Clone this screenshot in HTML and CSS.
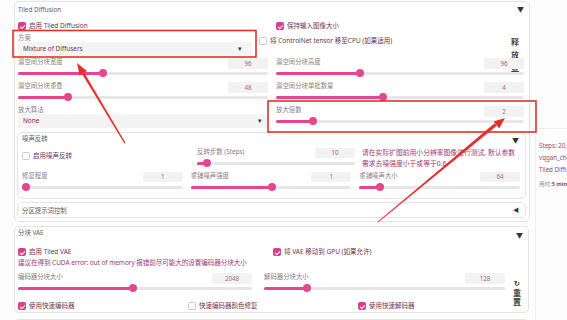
FILE: index.html
```html
<!DOCTYPE html>
<html lang="zh">
<head>
<meta charset="utf-8">
<title>Tiled Diffusion</title>
<link rel="stylesheet" href="styles.css">
</head>
<body>
<div class="page">
  <main class="main">
    <section class="acc td">
      <div class="acc-head"><span class="acc-title">Tiled Diffusion</span><span class="tri">▼</span></div>
      <div class="row enable-row">
        <label class="cb en-left"><span class="box on"></span>启用 Tiled Diffusion</label>
        <label class="cb"><span class="box on"></span>保持输入图像大小</label>
      </div>
      <div class="row method-row">
        <div class="field method">
          <div class="flabel">方案</div>
          <div class="select">Mixture of Diffusers<span class="caret">▾</span></div>
        </div>
        <label class="cb cn"><span class="box"></span>将 ControlNet tensor 移至CPU (如果适用)</label>
        <div class="vbtn free">释放显存</div>
      </div>
      <div class="grid2">
        <div class="col">
          <div class="slider">
            <div class="sl-top"><span class="sl-label">潜空间分块宽度</span><span class="num">96</span></div>
            <div class="track"><div class="fill" style="width:34%"></div></div>
          </div>
          <div class="slider">
            <div class="sl-top"><span class="sl-label">潜空间分块重叠</span><span class="num">48</span></div>
            <div class="track"><div class="fill" style="width:20%"></div></div>
          </div>
          <div class="field upscaler">
            <div class="flabel">放大算法</div>
            <div class="select tall">None<span class="caret">▾</span></div>
          </div>
        </div>
        <div class="col">
          <div class="slider">
            <div class="sl-top"><span class="sl-label">潜空间分块高度</span><span class="num">96</span></div>
            <div class="track"><div class="fill" style="width:34%"></div></div>
          </div>
          <div class="slider">
            <div class="sl-top"><span class="sl-label">潜空间分块单批数量</span><span class="num">4</span></div>
            <div class="track"><div class="fill" style="width:43%"></div></div>
          </div>
          <div class="slider">
            <div class="sl-top"><span class="sl-label">放大倍数</span><span class="num">2</span></div>
            <div class="track"><div class="fill" style="width:15%"></div></div>
          </div>
        </div>
      </div>

      <section class="acc sub noise">
        <div class="acc-head small"><span class="acc-title">噪声反转</span><span class="tri">▼</span></div>
        <div class="noise-row1">
          <label class="cb ni"><span class="box"></span>启用噪声反转</label>
          <div class="slider s2">
            <div class="sl-top"><span class="sl-label">反转步数 (Steps)</span><span class="num">10</span></div>
            <div class="track"><div class="fill" style="width:6.5%"></div></div>
          </div>
          <p class="note">请在实际扩图前用小分辨率图像进行测试, 默认参数需求去噪强度小于或等于0.6</p>
        </div>
        <div class="noise-row2">
          <div class="slider s2">
            <div class="sl-top"><span class="sl-label">修复程度</span><span class="num">1</span></div>
            <div class="track"><div class="fill" style="width:2.5%"></div></div>
          </div>
          <div class="slider s2">
            <div class="sl-top"><span class="sl-label">重铺噪声强度</span><span class="num">1</span></div>
            <div class="track"><div class="fill" style="width:50.5%"></div></div>
          </div>
          <div class="slider s2">
            <div class="sl-top"><span class="sl-label">重铺噪声大小</span><span class="num">64</span></div>
            <div class="track"><div class="fill" style="width:13%"></div></div>
          </div>
        </div>
      </section>

      <section class="acc sub region">
        <div class="acc-head region-head"><span class="acc-title">分区提示词控制</span><span class="tri left">◀</span></div>
      </section>
    </section>

    <section class="acc vae">
      <div class="acc-head vae-head"><span class="acc-title">分块 VAE</span><span class="tri">▼</span></div>
      <div class="row vae-row1">
        <div class="vae-left">
          <label class="cb"><span class="box on"></span>启用 Tiled VAE</label>
          <p class="note one">建议在得到 CUDA error: out of memory 报错前尽可能大的设置编码器分块大小</p>
        </div>
        <label class="cb"><span class="box on"></span>将 VAE 移动到 GPU (如果允许)</label>
      </div>
      <div class="row vae-row2">
        <div class="slider enc">
          <div class="sl-top"><span class="sl-label">编码器分块大小</span><span class="num">2048</span></div>
          <div class="track"><div class="fill" style="width:49%"></div></div>
        </div>
        <div class="slider dec">
          <div class="sl-top"><span class="sl-label">解码器分块大小</span><span class="num">128</span></div>
          <div class="track"><div class="fill" style="width:18%"></div></div>
        </div>
        <div class="vbtn reset"><span class="rot">↻</span><span class="rt">重置</span></div>
      </div>
      <div class="vae-row3">
        <label class="cb"><span class="box on"></span>使用快速编码器</label>
        <label class="cb"><span class="box"></span>快速编码器颜色修复</label>
        <label class="cb"><span class="box on"></span>使用快速解码器</label>
      </div>
    </section>
    <section class="acc next"></section>
  </main>
  <aside class="side">
    <div class="info">
      <p class="info-line">Steps: 20, Sampler</p>
      <p class="info-line">vqgan_chkpt</p>
      <p class="info-line">Tiled Diffusion</p>
      <p class="info-time"><span class="lbl">用时:</span>5 min</p>
    </div>
  </aside>
</div>

<svg class="annot" width="567" height="320" viewBox="0 0 567 320">
  <rect x="13" y="30.5" width="243" height="26.5" fill="none" stroke="#e4302b" stroke-width="1.6"/>
  <rect x="268" y="101" width="268" height="31" fill="none" stroke="#e4302b" stroke-width="1.6"/>
  <polygon points="125.6,143 124.4,143.6 82.4,74.4 84.6,73.2" fill="#e4302b"/>
  <polygon points="77,63 87,71 79.6,75.6" fill="#e4302b"/>
  <polygon points="378,222.4 377.6,221.8 494.6,123.2 496.8,125.8" fill="#e4302b"/>
  <polygon points="505,118 499.2,128.4 493.6,121.6" fill="#e4302b"/>
</svg>
</body>
</html>
```

FILE: styles.css
```css
* { box-sizing: border-box; }

html, body {
  margin: 0;
  padding: 0;
}

body {
  width: 567px;
  height: 320px;
  overflow: hidden;
  background: #fdfdfd;
  font-family: "Noto Sans", "Noto Sans CJK SC", sans-serif;
  font-size: 7px;
  color: #6e3350;
  position: relative;
}

p { margin: 0; }

.page {
  display: flex;
  align-items: flex-start;
}

.main {
  width: 516px;
  margin-left: 14px;
  padding-top: 1px;
  flex: none;
}

/* accordion blocks */
.acc {
  background: #fff;
  border: 1px solid #e6e3e5;
  border-radius: 5px;
}

.td {
  padding: 0 5px 3px 3px;
}

.acc-head {
  display: flex;
  justify-content: space-between;
  align-items: center;
  height: 14px;
}

.acc-title {
  color: #5f5a5d;
  font-size: 6.4px;
}

.tri {
  color: #333;
  font-size: 7px;
  line-height: 1;
}

.tri.left { font-size: 6px; }

.row {
  display: flex;
}

/* checkbox */
.cb {
  display: flex;
  align-items: center;
  gap: 3px;
  font-size: 6.5px;
  line-height: 10px;
  color: #6e3350;
  white-space: nowrap;
}

.box {
  width: 8px;
  height: 8px;
  flex: none;
  border-radius: 1.5px;
  border: 1px solid #dcc3cf;
  background: #fff;
  position: relative;
}

.box.on {
  background: #dc3f89;
  border-color: #dc3f89;
}

.box.on::after {
  content: "";
  position: absolute;
  left: 2px;
  top: 0.5px;
  width: 2px;
  height: 4px;
  border-right: 1px solid #fff;
  border-bottom: 1px solid #fff;
  transform: rotate(45deg);
}

.enable-row {
  margin-top: 3px;
  height: 14px;
  align-items: center;
}

.en-left { width: 258px; }

/* method row */
.method-row {
  height: 24px;
  align-items: flex-start;
}

.field .flabel {
  font-size: 6.4px;
  line-height: 9px;
  color: #8c7c84;
}

.method { width: 234px; }

.select {
  position: relative;
  height: 13px;
  line-height: 13px;
  background: #f5f4f5;
  border-radius: 2px;
  padding-left: 5px;
  font-size: 6.4px;
  color: #6e3350;
}

.select.tall { height: 14px; line-height: 14px; }

.caret {
  position: absolute;
  right: 10px;
  top: 0;
  font-size: 7px;
  color: #333;
}

.upscaler .select .caret { right: 6px; }

.cn {
  margin-left: 7px;
  margin-top: 3px;
}

.vbtn {
  font-weight: 700;
  color: #444;
  text-align: center;
  flex: none;
}

.free {
  margin-left: auto;
  margin-right: 4px;
  width: 10px;
  height: 40px;
  margin-bottom: -16px;
  margin-top: 2px;
  font-size: 8px;
  line-height: 13px;
  overflow: hidden;
}

/* grid of sliders */
.grid2 {
  display: grid;
  grid-template-columns: 250px 248px;
  column-gap: 8px;
}

.slider {
  height: 24px;
}

.sl-top {
  display: flex;
  justify-content: space-between;
  align-items: flex-start;
  height: 12px;
}

.sl-label {
  font-size: 6.4px;
  line-height: 9px;
  color: #8c7c84;
  white-space: nowrap;
}

.num {
  position: relative;
  width: 40px;
  height: 11px;
  margin-top: 1px;
  line-height: 11px;
  background: #f3f2f3;
  border-radius: 2px;
  text-align: center;
  font-size: 6.2px;
  color: #9a6a82;
}

.track {
  position: relative;
  margin-top: 2.5px;
  height: 3px;
  border-radius: 2px;
  background: #e7e5e6;
}

.fill {
  position: relative;
  height: 100%;
  border-radius: 2px;
  background: #e5478e;
}

.fill::after {
  content: "";
  position: absolute;
  right: -4px;
  top: -2.5px;
  width: 8px;
  height: 8px;
  border-radius: 50%;
  background: #e5478e;
}

/* nested accordions */
.sub {
  margin: 3px -2px 0 -1px;
  padding: 0 5px 3px 4px;
}

.acc-head.small {
  height: 14px;
  align-items: flex-start;
  padding-top: 1px;
}

.acc-head.small .tri { margin-top: 3px; margin-right: 1px; }

.noise-row1 {
  display: grid;
  grid-template-columns: 168px 158px 158px;
  column-gap: 7px;
}

.noise-row2 {
  display: grid;
  grid-template-columns: repeat(3, 1fr);
  column-gap: 8px;
}

.slider.s2 { height: 24px; }

.slider.s2 .sl-top { height: 11px; }

.slider.s2 .num { height: 10px; line-height: 10px; }

.slider.s2 .track { margin-top: 3.5px; }

.ni { margin-top: 4px; align-self: start; }

.note {
  font-size: 6.8px;
  line-height: 11px;
  color: #a13a6c;
}

.note.one { white-space: nowrap; font-size: 6.6px; letter-spacing: -0.1px; }

.region {
  padding: 0 5px 0 4px;
}

.region-head {
  height: 14px;
}

.region-head .tri { margin-right: 1px; }

/* VAE */
.vae {
  margin-top: 4px;
  width: 515px;
  padding: 0 4px 0 3px;
  height: 87px;
}

.vae-head {
  height: 16px;
  align-items: flex-start;
  padding-top: 1px;
}

.vae-head .tri { margin-top: 4px; margin-right: 1px; }

.vae-row1 {
  margin-top: 4px;
  align-items: flex-start;
}

.vae-left { width: 255px; }

.vae-row2 {
  margin-top: 4px;
  height: 22px;
  align-items: flex-start;
}

.enc { width: 234px; }

.dec { width: 241px; margin-left: 12px; }

.reset {
  width: 14px;
  margin-left: 5px;
  margin-top: 8px;
  height: 14px;
  display: flex;
  flex-direction: column;
  align-items: center;
}

.rot {
  display: block;
  font-size: 7px;
  line-height: 8px;
  font-weight: 700;
}

.rt {
  display: block;
  font-size: 8px;
  line-height: 9px;
  width: 9px;
}

.vae-row3 {
  display: grid;
  grid-template-columns: 170px 170px 1fr;
  margin-top: 6px;
  height: 12px;
  align-items: center;
}

.next {
  margin-top: 6px;
  height: 20px;
}

/* right side info */
.side {
  flex: 1;
  align-self: stretch;
  padding: 128px 0 0 5px;
  height: 320px;
  overflow: hidden;
}

.info {
  border-left: 1px solid #f0eef0;
  border-top: 1px solid #f0eef0;
  padding: 11px 0 0 3px;
  height: 200px;
  white-space: nowrap;
}

.info-line {
  font-size: 6.2px;
  line-height: 12px;
  color: #8f4f6f;
}

.info-time {
  margin-top: 2px;
  font-size: 5.6px;
  line-height: 12px;
  color: #8f4f6f;
  font-weight: 700;
}

.info-time .lbl { color: #9a8a92; font-weight: 400; }

/* annotation overlay */
.annot {
  position: absolute;
  left: 0;
  top: 0;
  pointer-events: none;
}
```
